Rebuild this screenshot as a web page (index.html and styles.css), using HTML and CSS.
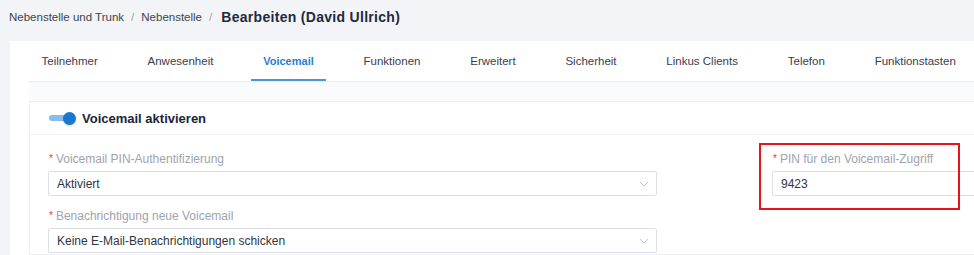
FILE: index.html
```html
<!DOCTYPE html>
<html lang="de">
<head>
  <meta charset="UTF-8" />
  <meta name="viewport" content="width=device-width, initial-scale=1.0"/>
  <title>Bearbeiten (David Ullrich)</title>
  <link rel="stylesheet" href="styles.css">
</head>
<body>
  <div class="breadcrumb">
    <span class="crumb">Nebenstelle und Trunk</span>
    <span class="sep">/</span>
    <span class="crumb">Nebenstelle</span>
    <span class="sep">/</span>
    <span class="crumb current">Bearbeiten (David Ullrich)</span>
  </div>

  <div class="card">
    <div class="tabs">
      <div class="tab">Teilnehmer</div>
      <div class="tab">Anwesenheit</div>
      <div class="tab active">Voicemail</div>
      <div class="tab">Funktionen</div>
      <div class="tab">Erweitert</div>
      <div class="tab">Sicherheit</div>
      <div class="tab">Linkus Clients</div>
      <div class="tab">Telefon</div>
      <div class="tab">Funktionstasten</div>
    </div>

    <div class="pane">
      <div class="section">
        <div class="section-head">
          <span class="switch"><span class="knob"></span></span>
          <span class="section-title">Voicemail aktivieren</span>
        </div>

        <div class="form-grid">
          <div class="field">
            <label class="label"><span class="req">*</span>Voicemail PIN-Authentifizierung</label>
            <div class="select">
              <span>Aktiviert</span>
              <svg class="chevron" width="10" height="6" viewBox="0 0 10 6"><polyline points="1,1 5,5 9,1" fill="none" stroke="#c3c7cf" stroke-width="1"/></svg>
            </div>
          </div>

          <div class="field">
            <label class="label"><span class="req">*</span>PIN für den Voicemail-Zugriff</label>
            <div class="input">9423</div>
          </div>

          <div class="field">
            <label class="label"><span class="req">*</span>Benachrichtigung neue Voicemail</label>
            <div class="select">
              <span>Keine E-Mail-Benachrichtigungen schicken</span>
              <svg class="chevron" width="10" height="6" viewBox="0 0 10 6"><polyline points="1,1 5,5 9,1" fill="none" stroke="#c3c7cf" stroke-width="1"/></svg>
            </div>
          </div>
        </div>
      </div>
    </div>
  </div>

  <div class="highlight"></div>
</body>
</html>
```

FILE: styles.css
```css
* {
  box-sizing: border-box;
  margin: 0;
  padding: 0;
}

body {
  font-family: 'Liberation Sans', Arial, sans-serif;
  background: #f3f4f7;
  color: #333a45;
  width: 974px;
  height: 255px;
  overflow: hidden;
  position: relative;
}

.breadcrumb {
  height: 34px;
  padding-left: 9px;
  display: flex;
  align-items: center;
  font-size: 11.5px;
  color: #3d4350;
}

.sep {
  color: #9aa0aa;
  margin: 0 7px;
}

.crumb.current {
  font-size: 14px;
  font-weight: bold;
  letter-spacing: 0.3px;
  color: #1e2a40;
  margin-left: 2px;
}

.card {
  margin-top: 7px;
  margin-left: 10px;
  height: 214px;
  background: #fff;
  padding-left: 19px;
  overflow: hidden;
}

.tabs {
  display: flex;
  height: 41px;
  border-bottom: 1px solid #e9ecf1;
}

.tab {
  height: 40px;
  line-height: 40px;
  padding: 0 12.5px;
  margin-right: 24.8px;
  font-size: 11.5px;
  color: #3a404c;
  white-space: nowrap;
}

.tab.active {
  color: #1f7fd1;
  font-weight: bold;
  font-size: 11px;
  border-bottom: 2px solid #4b94dc;
}

.pane {
  background: #fafbfc;
  padding-top: 19px;
  height: 173px;
}

.section {
  background: #fff;
  border: 1px solid #eef0f3;
  border-right: none;
  height: 154px;
}

.section-head {
  height: 33px;
  border-bottom: 1px solid #eef0f3;
  display: flex;
  align-items: center;
  padding-left: 19px;
}

.switch {
  width: 27px;
  height: 13px;
  position: relative;
  display: flex;
  align-items: center;
  margin-right: 6px;
}

.switch::before {
  content: "";
  width: 22px;
  height: 6px;
  border-radius: 3px;
  background: #86bdea;
}

.knob {
  position: absolute;
  right: 0;
  top: 0;
  width: 13px;
  height: 13px;
  border-radius: 50%;
  background: #1479cf;
  box-shadow: 0 1px 2px rgba(0, 0, 0, 0.2);
}

.section-title {
  font-size: 13px;
  font-weight: bold;
  color: #1c2535;
}

.form-grid {
  display: grid;
  grid-template-columns: 609px 1fr;
  column-gap: 115px;
  row-gap: 12px;
  padding: 16px 0 0 18px;
  margin-right: -4px;
}

.label {
  display: block;
  height: 16px;
  line-height: 16px;
  font-size: 12px;
  color: #9ea3ad;
  margin-bottom: 4px;
  padding-left: 1px;
  white-space: nowrap;
}

.req {
  color: #e5383b;
  margin-right: 3px;
  font-size: 10px;
  vertical-align: top;
}

.select,
.input {
  height: 25px;
  border: 1px solid #dcdfe6;
  border-radius: 2px;
  padding: 0 7px 0 8px;
  display: flex;
  align-items: center;
  justify-content: space-between;
  font-size: 12px;
  color: #2f3540;
}

.highlight {
  position: absolute;
  left: 759px;
  top: 143px;
  width: 201px;
  height: 67px;
  border: 2px solid #e8141c;
}
```
